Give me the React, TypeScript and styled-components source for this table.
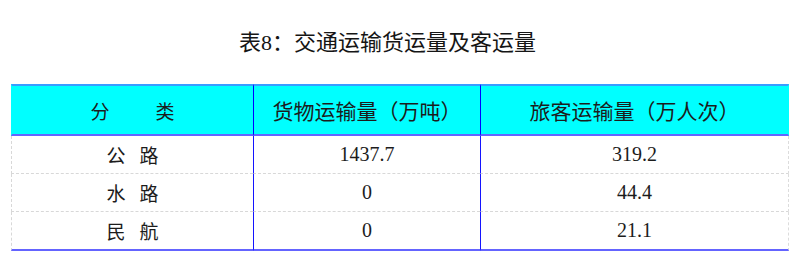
import React from "react";
import styled, { createGlobalStyle } from "styled-components";

const Global = createGlobalStyle`
  html, body { margin: 0; padding: 0; background: #ffffff; }
  body { font-family: "Liberation Serif", "Noto Sans CJK SC", serif; color: #1c1c1c; }
`;

const Page = styled.div`
  width: 800px;
  height: 264px;
  overflow: hidden;
  padding: 28px 11px 0 11px;
  box-sizing: border-box;
`;

const Title = styled.h1`
  margin: 0 0 26px 0;
  padding-right: 25px;
  font-size: 22px;
  line-height: 30px;
  font-weight: 400;
  text-align: center;
  color: #151515;
  font-family: "Liberation Serif", "Noto Sans CJK SC", serif;
`;

const Table = styled.table`
  width: 778px;
  border-collapse: separate;
  border-spacing: 0;
  table-layout: fixed;
`;

const HeadCell = styled.th<{ $first?: boolean; $last?: boolean }>`
  box-sizing: border-box;
  height: 52px;
  padding: 0;
  background: #00ffff;
  border-top: 2px solid #3a9cff;
  border-bottom: 2px solid #6464ff;
  border-left: ${(p) => (p.$first ? "1px solid #00ffff" : "1px solid #0000ff")};
  border-right: ${(p) => (p.$last ? "1px solid #00ffff" : "0")};
  font-family: "Noto Sans CJK SC", sans-serif;
  font-weight: 400;
  font-size: 21px;
  color: #1c1c1c;
  text-align: center;
  vertical-align: middle;
`;

const Cell = styled.td<{ $first?: boolean; $last?: boolean; $end?: boolean }>`
  box-sizing: border-box;
  height: ${(p) => (p.$end ? "39px" : "38px")};
  padding: 0;
  border-bottom: ${(p) => (p.$end ? "2px solid #6464ff" : "1px dashed #d8d8d8")};
  border-left: ${(p) => (p.$first ? "1px dashed #d8d8d8" : "1px solid #1414ff")};
  border-right: ${(p) => (p.$last ? "1px dashed #dcdcdc" : "0")};
  font-size: 20px;
  text-align: center;
  vertical-align: middle;
  color: #1c1c1c;
`;

const Spaced = styled.span<{ $gap: number }>`
  display: inline-flex;
  gap: ${(p) => p.$gap}px;
  font-family: "Noto Sans CJK SC", sans-serif;
  font-size: 19px;
`;

const rows = [
  { name: ["公", "路"], freight: "1437.7", passenger: "319.2" },
  { name: ["水", "路"], freight: "0", passenger: "44.4" },
  { name: ["民", "航"], freight: "0", passenger: "21.1" },
];

export default function App() {
  return (
    <Page>
      <Global />
      <Title>表8：交通运输货运量及客运量</Title>
      <Table>
        <colgroup>
          <col style={{ width: "242px" }} />
          <col style={{ width: "227px" }} />
          <col style={{ width: "309px" }} />
        </colgroup>
        <thead>
          <tr>
            <HeadCell $first>
              <Spaced $gap={46}>
                <span>分</span>
                <span>类</span>
              </Spaced>
            </HeadCell>
            <HeadCell>货物运输量（万吨）</HeadCell>
            <HeadCell $last>旅客运输量（万人次）</HeadCell>
          </tr>
        </thead>
        <tbody>
          {rows.map((r, i) => {
            const end = i === rows.length - 1;
            return (
              <tr key={i}>
                <Cell $first $end={end}>
                  <Spaced $gap={14}>
                    <span>{r.name[0]}</span>
                    <span>{r.name[1]}</span>
                  </Spaced>
                </Cell>
                <Cell $end={end}>{r.freight}</Cell>
                <Cell $last $end={end}>{r.passenger}</Cell>
              </tr>
            );
          })}
        </tbody>
      </Table>
    </Page>
  );
}
